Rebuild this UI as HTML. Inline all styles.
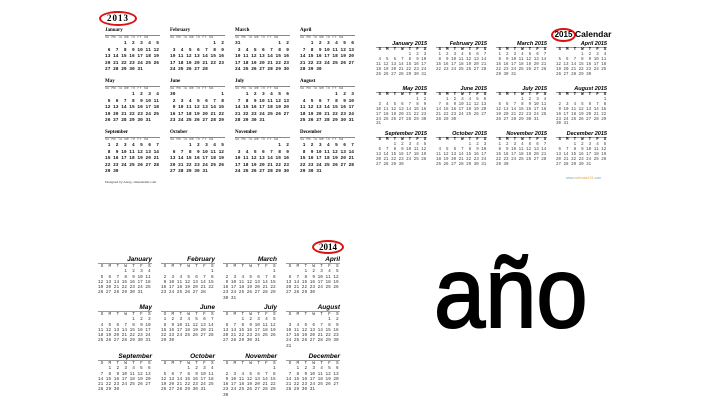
<!DOCTYPE html>
<html><head><meta charset="utf-8"><style>
*{margin:0;padding:0}
body{width:720px;height:405px;background:#fff;position:relative;overflow:hidden;font-family:"Liberation Sans",sans-serif}
.m{position:absolute}
.m pre{font-family:"Liberation Mono",monospace;white-space:pre}
.a .t{font:bold 5px "Liberation Serif",serif;height:7px;color:#000}
.a pre{font-size:4.5px;line-height:6.5px;font-weight:bold;color:#111}
.a .h{font-size:3.6px;line-height:5px;border-top:1px solid #888;color:#555;font-weight:normal;width:55px}
.c .t{font:italic bold 5.5px "Liberation Sans",sans-serif;text-align:right;height:6px;width:51px;border-bottom:1px solid #999}
.c pre{font-size:4.2px;line-height:4.9px;color:#444}
.c .h{color:#000;font-weight:bold}
.b .t{font:italic bold 6.5px "Liberation Sans",sans-serif;text-align:right;height:7px;width:54px;border-bottom:1px solid #999}
.b pre{font-size:4.4px;line-height:5.25px;color:#333}
.oval{position:absolute;border:2px solid #d11;border-radius:50%;text-align:center;font-weight:bold;color:#000}
</style></head><body>

<div class="oval" style="left:99px;top:11px;width:34px;height:11px;font:bold 9px/11px 'Liberation Serif',serif;letter-spacing:1px">2013</div>

<div class="m a" style="left:105px;top:28px"><div class="t">January</div><pre class="h">Su Mo Tu We Th Fr Sa</pre><pre>       1  2  3  4  5
 6  7  8  9 10 11 12
13 14 15 16 17 18 19
20 21 22 23 24 25 26
27 28 29 30 31</pre></div>
<div class="m a" style="left:170px;top:28px"><div class="t">February</div><pre class="h">Su Mo Tu We Th Fr Sa</pre><pre>                1  2
 3  4  5  6  7  8  9
10 11 12 13 14 15 16
17 18 19 20 21 22 23
24 25 26 27 28</pre></div>
<div class="m a" style="left:235px;top:28px"><div class="t">March</div><pre class="h">Su Mo Tu We Th Fr Sa</pre><pre>31              1  2
 3  4  5  6  7  8  9
10 11 12 13 14 15 16
17 18 19 20 21 22 23
24 25 26 27 28 29 30</pre></div>
<div class="m a" style="left:300px;top:28px"><div class="t">April</div><pre class="h">Su Mo Tu We Th Fr Sa</pre><pre>    1  2  3  4  5  6
 7  8  9 10 11 12 13
14 15 16 17 18 19 20
21 22 23 24 25 26 27
28 29 30</pre></div>

<div class="m a" style="left:105px;top:79px"><div class="t">May</div><pre class="h">Su Mo Tu We Th Fr Sa</pre><pre>          1  2  3  4
 5  6  7  8  9 10 11
12 13 14 15 16 17 18
19 20 21 22 23 24 25
26 27 28 29 30 31</pre></div>
<div class="m a" style="left:170px;top:79px"><div class="t">June</div><pre class="h">Su Mo Tu We Th Fr Sa</pre><pre>30                 1
 2  3  4  5  6  7  8
 9 10 11 12 13 14 15
16 17 18 19 20 21 22
23 24 25 26 27 28 29</pre></div>
<div class="m a" style="left:235px;top:79px"><div class="t">July</div><pre class="h">Su Mo Tu We Th Fr Sa</pre><pre>    1  2  3  4  5  6
 7  8  9 10 11 12 13
14 15 16 17 18 19 20
21 22 23 24 25 26 27
28 29 30 31</pre></div>
<div class="m a" style="left:300px;top:79px"><div class="t">August</div><pre class="h">Su Mo Tu We Th Fr Sa</pre><pre>             1  2  3
 4  5  6  7  8  9 10
11 12 13 14 15 16 17
18 19 20 21 22 23 24
25 26 27 28 29 30 31</pre></div>

<div class="m a" style="left:105px;top:130px"><div class="t">September</div><pre class="h">Su Mo Tu We Th Fr Sa</pre><pre> 1  2  3  4  5  6  7
 8  9 10 11 12 13 14
15 16 17 18 19 20 21
22 23 24 25 26 27 28
29 30</pre></div>
<div class="m a" style="left:170px;top:130px"><div class="t">October</div><pre class="h">Su Mo Tu We Th Fr Sa</pre><pre>       1  2  3  4  5
 6  7  8  9 10 11 12
13 14 15 16 17 18 19
20 21 22 23 24 25 26
27 28 29 30 31</pre></div>
<div class="m a" style="left:235px;top:130px"><div class="t">November</div><pre class="h">Su Mo Tu We Th Fr Sa</pre><pre>                1  2
 3  4  5  6  7  8  9
10 11 12 13 14 15 16
17 18 19 20 21 22 23
24 25 26 27 28 29 30</pre></div>
<div class="m a" style="left:300px;top:130px"><div class="t">December</div><pre class="h">Su Mo Tu We Th Fr Sa</pre><pre> 1  2  3  4  5  6  7
 8  9 10 11 12 13 14
15 16 17 18 19 20 21
22 23 24 25 26 27 28
29 30 31</pre></div>
<div style="position:absolute;left:105px;top:180px;font:3.5px 'Liberation Serif',serif;color:#333">Designed by Alexy, amazehabit.com</div>

<!-- 2015 -->
<div class="oval" style="left:551px;top:28px;width:21px;height:10px;font:bold 8px/10px 'Liberation Sans',sans-serif">2015</div>
<div style="position:absolute;left:575px;top:29px;font:bold 8.5px/10px 'Liberation Sans',sans-serif">Calendar</div>

<div class="m c" style="left:376px;top:41px"><div class="t">January 2015</div><pre class="h"> S  M  T  W  T  F  S</pre><pre>             1  2  3
 4  5  6  7  8  9 10
11 12 13 14 15 16 17
18 19 20 21 22 23 24
25 26 27 28 29 30 31</pre></div>
<div class="m c" style="left:436px;top:41px"><div class="t">February 2015</div><pre class="h"> S  M  T  W  T  F  S</pre><pre> 1  2  3  4  5  6  7
 8  9 10 11 12 13 14
15 16 17 18 19 20 21
22 23 24 25 26 27 28</pre></div>
<div class="m c" style="left:496px;top:41px"><div class="t">March 2015</div><pre class="h"> S  M  T  W  T  F  S</pre><pre> 1  2  3  4  5  6  7
 8  9 10 11 12 13 14
15 16 17 18 19 20 21
22 23 24 25 26 27 28
29 30 31</pre></div>
<div class="m c" style="left:556px;top:41px"><div class="t">April 2015</div><pre class="h"> S  M  T  W  T  F  S</pre><pre>          1  2  3  4
 5  6  7  8  9 10 11
12 13 14 15 16 17 18
19 20 21 22 23 24 25
26 27 28 29 30</pre></div>

<div class="m c" style="left:376px;top:86px"><div class="t">May 2015</div><pre class="h"> S  M  T  W  T  F  S</pre><pre>                1  2
 3  4  5  6  7  8  9
10 11 12 13 14 15 16
17 18 19 20 21 22 23
24 25 26 27 28 29 30
31</pre></div>
<div class="m c" style="left:436px;top:86px"><div class="t">June 2015</div><pre class="h"> S  M  T  W  T  F  S</pre><pre>    1  2  3  4  5  6
 7  8  9 10 11 12 13
14 15 16 17 18 19 20
21 22 23 24 25 26 27
28 29 30</pre></div>
<div class="m c" style="left:496px;top:86px"><div class="t">July 2015</div><pre class="h"> S  M  T  W  T  F  S</pre><pre>          1  2  3  4
 5  6  7  8  9 10 11
12 13 14 15 16 17 18
19 20 21 22 23 24 25
26 27 28 29 30 31</pre></div>
<div class="m c" style="left:556px;top:86px"><div class="t">August 2015</div><pre class="h"> S  M  T  W  T  F  S</pre><pre>                   1
 2  3  4  5  6  7  8
 9 10 11 12 13 14 15
16 17 18 19 20 21 22
23 24 25 26 27 28 29
30 31</pre></div>

<div class="m c" style="left:376px;top:131px"><div class="t">September 2015</div><pre class="h"> S  M  T  W  T  F  S</pre><pre>       1  2  3  4  5
 6  7  8  9 10 11 12
13 14 15 16 17 18 19
20 21 22 23 24 25 26
27 28 29 30</pre></div>
<div class="m c" style="left:436px;top:131px"><div class="t">October 2015</div><pre class="h"> S  M  T  W  T  F  S</pre><pre>             1  2  3
 4  5  6  7  8  9 10
11 12 13 14 15 16 17
18 19 20 21 22 23 24
25 26 27 28 29 30 31</pre></div>
<div class="m c" style="left:496px;top:131px"><div class="t">November 2015</div><pre class="h"> S  M  T  W  T  F  S</pre><pre> 1  2  3  4  5  6  7
 8  9 10 11 12 13 14
15 16 17 18 19 20 21
22 23 24 25 26 27 28
29 30</pre></div>
<div class="m c" style="left:556px;top:131px"><div class="t">December 2015</div><pre class="h"> S  M  T  W  T  F  S</pre><pre>       1  2  3  4  5
 6  7  8  9 10 11 12
13 14 15 16 17 18 19
20 21 22 23 24 25 26
27 28 29 30 31</pre></div>
<div style="position:absolute;left:566px;top:176px;font:3.5px 'Liberation Sans',sans-serif;color:#d9a84a"><span style="color:#7ab">www.</span>calendar101<span style="color:#7ab">.com</span></div>

<!-- 2014 -->
<div class="oval" style="left:312px;top:240px;width:28px;height:10px;font:bold 9px/10px 'Liberation Serif',serif">2014</div>

<div class="m b" style="left:98px;top:256px"><div class="t">January</div><pre> S  M  T  W  T  F  S</pre><pre>          1  2  3  4
 5  6  7  8  9 10 11
12 13 14 15 16 17 18
19 20 21 22 23 24 25
26 27 28 29 30 31</pre></div>
<div class="m b" style="left:161px;top:256px"><div class="t">February</div><pre> S  M  T  W  T  F  S</pre><pre>                   1
 2  3  4  5  6  7  8
 9 10 11 12 13 14 15
16 17 18 19 20 21 22
23 24 25 26 27 28</pre></div>
<div class="m b" style="left:223px;top:256px"><div class="t">March</div><pre> S  M  T  W  T  F  S</pre><pre>                   1
 2  3  4  5  6  7  8
 9 10 11 12 13 14 15
16 17 18 19 20 21 22
23 24 25 26 27 28 29
30 31</pre></div>
<div class="m b" style="left:286px;top:256px"><div class="t">April</div><pre> S  M  T  W  T  F  S</pre><pre>       1  2  3  4  5
 6  7  8  9 10 11 12
13 14 15 16 17 18 19
20 21 22 23 24 25 26
27 28 29 30</pre></div>

<div class="m b" style="left:98px;top:304px"><div class="t">May</div><pre> S  M  T  W  T  F  S</pre><pre>             1  2  3
 4  5  6  7  8  9 10
11 12 13 14 15 16 17
18 19 20 21 22 23 24
25 26 27 28 29 30 31</pre></div>
<div class="m b" style="left:161px;top:304px"><div class="t">June</div><pre> S  M  T  W  T  F  S</pre><pre> 1  2  3  4  5  6  7
 8  9 10 11 12 13 14
15 16 17 18 19 20 21
22 23 24 25 26 27 28
29 30</pre></div>
<div class="m b" style="left:223px;top:304px"><div class="t">July</div><pre> S  M  T  W  T  F  S</pre><pre>       1  2  3  4  5
 6  7  8  9 10 11 12
13 14 15 16 17 18 19
20 21 22 23 24 25 26
27 28 29 30 31</pre></div>
<div class="m b" style="left:286px;top:304px"><div class="t">August</div><pre> S  M  T  W  T  F  S</pre><pre>                1  2
 3  4  5  6  7  8  9
10 11 12 13 14 15 16
17 18 19 20 21 22 23
24 25 26 27 28 29 30
31</pre></div>

<div class="m b" style="left:98px;top:353px"><div class="t">September</div><pre> S  M  T  W  T  F  S</pre><pre>    1  2  3  4  5  6
 7  8  9 10 11 12 13
14 15 16 17 18 19 20
21 22 23 24 25 26 27
28 29 30</pre></div>
<div class="m b" style="left:161px;top:353px"><div class="t">October</div><pre> S  M  T  W  T  F  S</pre><pre>          1  2  3  4
 5  6  7  8  9 10 11
12 13 14 15 16 17 18
19 20 21 22 23 24 25
26 27 28 29 30 31</pre></div>
<div class="m b" style="left:223px;top:353px"><div class="t">November</div><pre> S  M  T  W  T  F  S</pre><pre>                   1
 2  3  4  5  6  7  8
 9 10 11 12 13 14 15
16 17 18 19 20 21 22
23 24 25 26 27 28 29
30</pre></div>
<div class="m b" style="left:286px;top:353px"><div class="t">December</div><pre> S  M  T  W  T  F  S</pre><pre>    1  2  3  4  5  6
 7  8  9 10 11 12 13
14 15 16 17 18 19 20
21 22 23 24 25 26 27
28 29 30 31</pre></div>

<div style="position:absolute;left:434px;top:243px;font:100px/100px 'Liberation Sans',sans-serif;transform:scaleX(0.92);transform-origin:0 0;color:#000;-webkit-text-stroke:2px #000">año</div>
</body></html>
